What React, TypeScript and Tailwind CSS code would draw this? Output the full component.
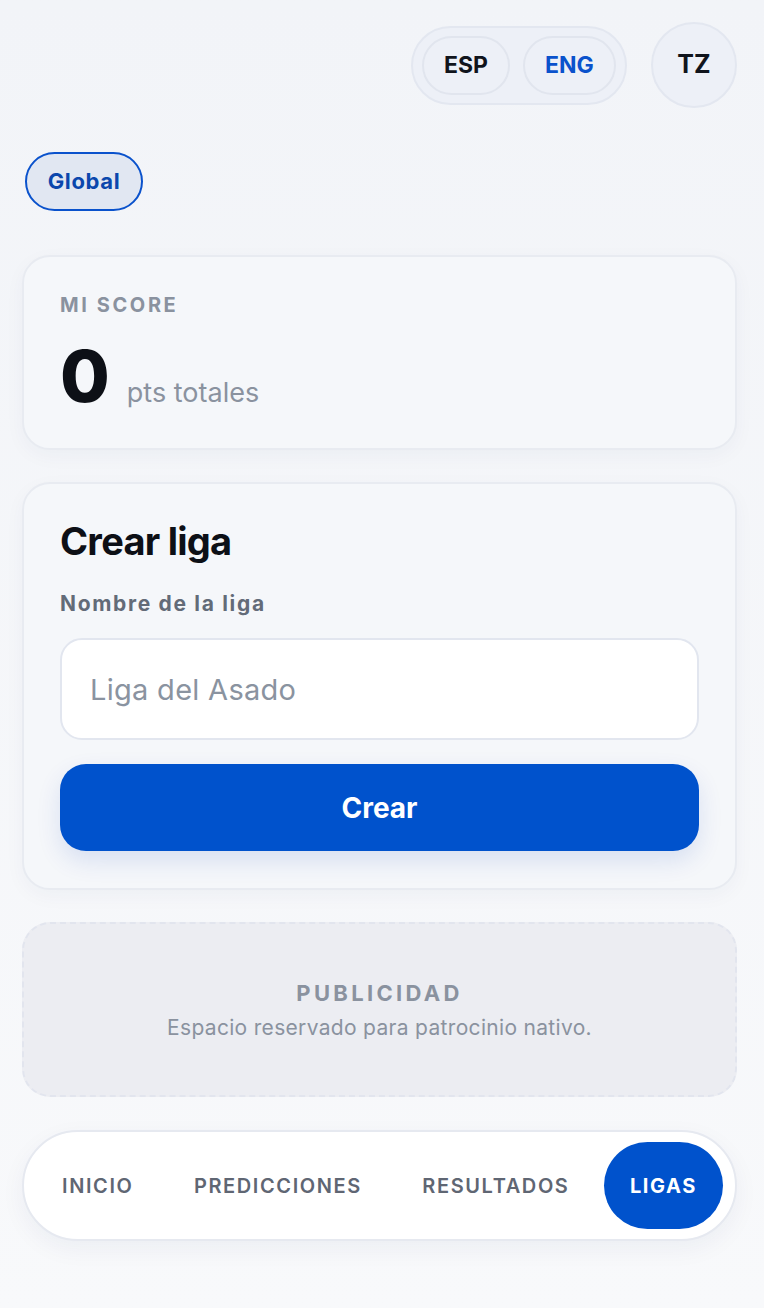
import { useState } from "react";

const tabs = ["Inicio", "Predicciones", "Resultados", "Ligas"];

export default function App() {
  const [lang, setLang] = useState<string>("ENG");
  const [tab, setTab] = useState<string>("Ligas");
  const [leagueName, setLeagueName] = useState<string>("");

  return (
    <div
      className="min-h-[1308px] w-full bg-gradient-to-b from-[#f2f4f8] to-[#f8f9fb] pl-[22px] pr-[27px] pt-[22px] pb-[60px]"
      style={{ fontFamily: "Inter, 'Noto Sans', sans-serif" }}
    >
      {/* header */}
      <div className="flex items-center justify-end gap-[24px]">
        <div className="flex items-center gap-[13px] rounded-full border-2 border-[#e3e7f0] bg-[#edf0f7] px-[9px] py-[8px]">
          {["ESP", "ENG"].map((l) => (
            <button
              key={l}
              onClick={() => setLang(l)}
              className={
                "h-[59px] rounded-full border-2 border-[#e1e5ee] text-[23px] font-bold " +
                (l === "ESP" ? "w-[88px] " : "w-[93px] ") +
                (lang === l ? "text-[#0a52cc]" : "text-[#10141c]")
              }
            >
              {l}
            </button>
          ))}
        </div>
        <div className="flex h-[86px] w-[86px] items-center justify-center rounded-full border-2 border-[#e3e7f0] bg-[#edf0f7] text-[25px] font-bold text-[#10141c]">
          TZ
        </div>
      </div>

      {/* league chip */}
      <div className="mt-[44px] ml-[3px]">
        <button className="h-[59px] w-[118px] rounded-full border-2 border-[#0a52cc] bg-[#e1e7f2] text-[22px] font-bold tracking-[0.03em] text-[#0b47ad]">
          Global
        </button>
      </div>

      {/* score */}
      <div className="mt-[44px] rounded-[28px] border-2 border-[#e8ebf1] bg-[#f5f7fa] px-[36px] pt-[36px] pb-[36px] shadow-[0_6px_20px_rgba(20,40,90,0.04)]">
        <div className="text-[20px] leading-[24px] font-bold tracking-[0.13em] text-[#8a929f]">
          MI SCORE
        </div>
        <div className="mt-[23px] flex items-baseline gap-[17px]">
          <span className="text-[72px] leading-none font-extrabold text-[#0d1016]">0</span>
          <span className="text-[27px] leading-none text-[#8a929f]">pts totales</span>
        </div>
      </div>

      {/* create league */}
      <div className="mt-[32px] rounded-[28px] border-2 border-[#e8ebf1] bg-[#f5f7fa] px-[36px] pt-[35px] pb-[37px] shadow-[0_6px_20px_rgba(20,40,90,0.04)]">
        <h2 className="text-[38px] leading-[44px] font-bold tracking-[-0.02em] text-[#0d1016]">
          Crear liga
        </h2>
        <label className="mt-[29px] block text-[21px] leading-[24px] font-bold tracking-[0.08em] text-[#636b78]">
          Nombre de la liga
        </label>
        <input
          type="text"
          value={leagueName}
          onChange={(e) => setLeagueName(e.target.value)}
          placeholder="Liga del Asado"
          className="mt-[22px] h-[102px] w-full rounded-[22px] border-2 border-[#e2e6ef] bg-white px-[28px] text-[29px] tracking-[0.01em] text-[#10141c] outline-none placeholder:text-[#8a93a0]"
        />
        <button className="mt-[24px] h-[87px] w-full rounded-[26px] bg-[#0052cc] text-[28px] font-bold text-white shadow-[0_10px_24px_rgba(0,60,180,0.12)]">
          Crear
        </button>
      </div>

      {/* ad */}
      <div className="mt-[32px] flex h-[175px] flex-col items-center justify-center rounded-[28px] border-2 border-dashed border-[#e2e5ee] bg-[#ecedf2]">
        <div className="text-[22px] leading-[26px] font-bold tracking-[0.15em] text-[#8a929f]">
          PUBLICIDAD
        </div>
        <div className="mt-[10px] text-[21px] leading-[24px] tracking-[0.015em] text-[#8a929f]">
          Espacio reservado para patrocinio nativo.
        </div>
      </div>

      {/* nav */}
      <nav className="mt-[33px] flex h-[111px] items-center justify-between rounded-full border-2 border-[#e6e9f0] bg-white p-[12px] shadow-[0_8px_24px_rgba(20,40,90,0.05)]">
        {tabs.map((t) => (
          <button
            key={t}
            onClick={() => setTab(t)}
            className={
              "h-[87px] rounded-full px-[26px] text-[20px] uppercase tracking-[0.08em] " +
              (tab === t ? "bg-[#0052cc] font-bold text-white" : "font-semibold text-[#5f6673]")
            }
          >
            {t}
          </button>
        ))}
      </nav>
    </div>
  );
}
